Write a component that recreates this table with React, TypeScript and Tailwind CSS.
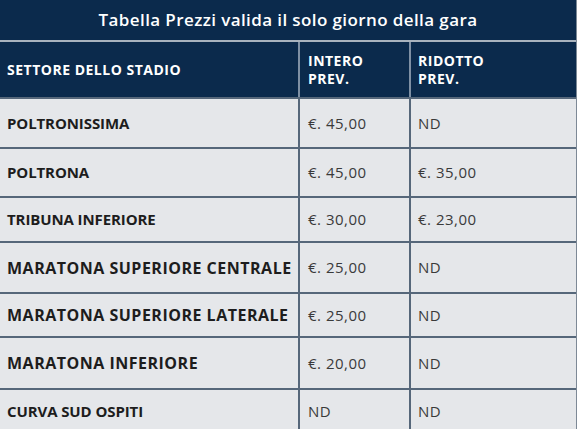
import React from 'react'

interface Row {
  name: string
  intero: string
  ridotto: string
  h: string
  big?: boolean
}

const rows: Row[] = [
  { name: 'POLTRONISSIMA', intero: '€. 45,00', ridotto: 'ND', h: 'h-[50px]' },
  { name: 'POLTRONA', intero: '€. 45,00', ridotto: '€. 35,00', h: 'h-[49px]' },
  { name: 'TRIBUNA INFERIORE', intero: '€. 30,00', ridotto: '€. 23,00', h: 'h-[45px]' },
  { name: 'MARATONA SUPERIORE CENTRALE', intero: '€. 25,00', ridotto: 'ND', h: 'h-[51px]', big: true },
  { name: 'MARATONA SUPERIORE LATERALE', intero: '€. 25,00', ridotto: 'ND', h: 'h-[44px]', big: true },
  { name: 'MARATONA INFERIORE', intero: '€. 20,00', ridotto: 'ND', h: 'h-[52px]', big: true },
  { name: 'CURVA SUD OSPITI', intero: 'ND', ridotto: 'ND', h: 'h-[44px]' },
]

const font = { fontFamily: '"Open Sans", "DejaVu Sans", sans-serif' }

export default function App() {
  return (
    <div className="w-[578px] h-[429px] overflow-hidden bg-white" style={font}>
      <div className="w-[577px] border-r border-[#7d8996]">
        {/* title */}
        <div className="h-[42px] bg-[#0b2a4c] flex items-center justify-center text-white text-[17px] tracking-[0.4px] font-semibold border-b-2 border-[#a9b3be]">
          Tabella Prezzi valida il solo giorno della gara
        </div>

        {/* header */}
        <div className="h-[55px] bg-[#0b2a4c] flex text-white text-[14px] tracking-[0.5px] font-bold leading-[18px]">
          <div className="w-[300px] flex items-center pl-[7px] border-r-2 border-[#7f90a4]">
            SETTORE DELLO STADIO
          </div>
          <div className="w-[111px] pl-[8px] pt-[10px] border-r-2 border-[#7f90a4]">
            INTERO
            <br />
            PREV.
          </div>
          <div className="flex-1 pl-[7px] pt-[10px]">
            RIDOTTO
            <br />
            PREV.
          </div>
        </div>

        {rows.map((r, i) => (
          <div key={i} className={`${r.h} flex bg-[#e5e7ea] border-t-2 border-[#56677a]`}>
            <div
              className={`w-[300px] flex items-center pl-[7px] font-bold text-[#1d1d1d] border-r-2 border-[#56677a] ${
                r.big ? 'text-[16px] tracking-[0.5px]' : 'text-[15px] tracking-[-0.1px]'
              }`}
            >
              {r.name}
            </div>
            <div className="w-[111px] flex items-center pl-[8px] text-[15px] tracking-[0.5px] text-[#3a3a3a] border-r-2 border-[#56677a]">
              {r.intero}
            </div>
            <div className="flex-1 flex items-center pl-[7px] text-[15px] tracking-[0.5px] text-[#3a3a3a]">
              {r.ridotto}
            </div>
          </div>
        ))}
      </div>
    </div>
  )
}
